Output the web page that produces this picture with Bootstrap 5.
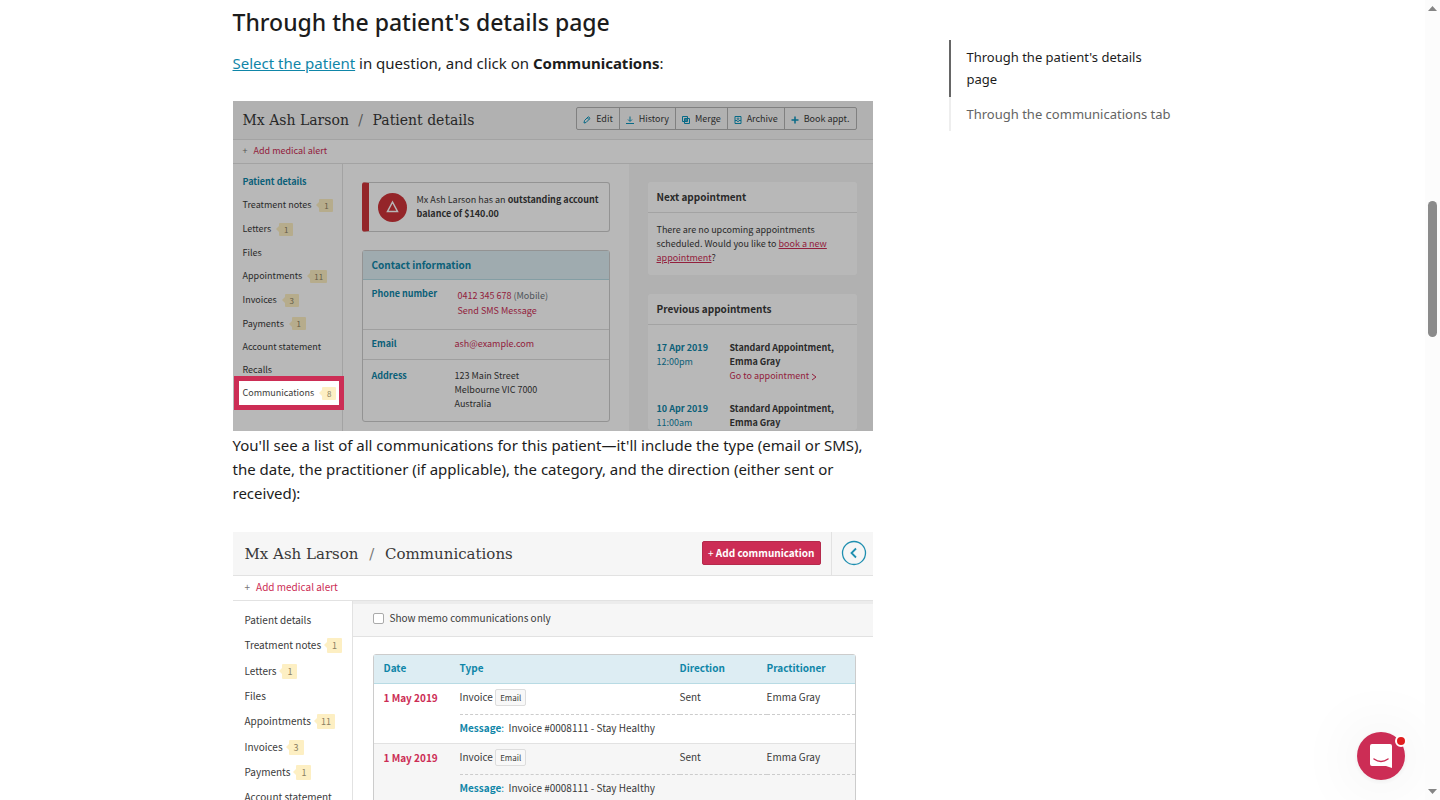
<!DOCTYPE html>
<html lang="en">
<head>
<meta charset="utf-8">
<meta name="viewport" content="width=device-width, initial-scale=1">
<title>Patient communications</title>
<link href="https://cdn.jsdelivr.net/npm/bootstrap@5.3.0/dist/css/bootstrap.min.css" rel="stylesheet">
<script src="https://cdn.jsdelivr.net/npm/bootstrap@5.3.0/dist/js/bootstrap.bundle.min.js"></script>
<style>
  :root { --teal: #0f86a8; --pink: #cc2d55; --ink: #3a3a3a; --line: #e2e2e2; --pale: #f6f6f6; }
  body { font-family: "Noto Sans", sans-serif; font-size: 15px; line-height: 24px; color: #1c1c1c; height: 100vh; overflow: hidden; }
  .page-scroll { height: 100vh; overflow: hidden; }
  .page-wrap { max-width: 960px; }
  .article-col { flex: 0 1 640px; min-width: 0; }
  .article-col h2 { font-size: 23px; line-height: 28px; font-weight: 500; padding-top: 8px; margin-bottom: 15px; }
  .article-col > p { margin: 0; }
  .article-col > p a { color: var(--teal); }
  .lead-in { padding-bottom: 26px; }
  .after-shot { padding: 2px 0 27px; }

  .toc { flex: 0 0 244px; font-size: 13px; line-height: 22px; margin-top: 40px; }
  .toc a { display: block; color: #646464; text-decoration: none; padding: 6px 16px; border-left: 2px solid #eee; }
  .toc a.current { color: #1c1c1c; border-color: #666; padding: 6px 48px 7px 16px; }

  .shot { position: relative; overflow: hidden; background: #fff; color: var(--ink); font-family: "Noto Sans CJK SC", sans-serif; font-size: 9px; line-height: 14px; }
  .shot a { text-decoration: none; color: var(--pink); }
  .shot-head { background: var(--pale); border-bottom: 1px solid var(--line); }
  .shot-title { font-family: "Roboto Slab", "DejaVu Serif", serif; color: #383838; margin: 0; font-weight: 400; white-space: nowrap; }
  .shot-alert { border-bottom: 1px solid var(--line); }
  .shot-alert span, .slash { color: #777; }
  .slash { margin: 0 6px; }
  .side { border-right: 1px solid var(--line); }
  .shot .side a { display: flex; align-items: center; color: var(--ink); white-space: nowrap; }
  .tag { position: relative; background: #fdefc3; color: #8b8062; border-radius: 1px; text-align: center; }
  .tag::before { content: ""; position: absolute; left: -3px; top: 50%; margin-top: -3px; border: 3px solid transparent; border-left: 0; border-right-color: #fdefc3; }

  .shot-a { height: 330px; }
  .shot-a::after { content: ""; position: absolute; inset: 0; background: rgba(0,0,0,.28); pointer-events: none; z-index: 1; }
  .shot-a .shot-head { height: 39px; padding: 0 16px 3px 10px; }
  .shot-a .shot-title { font-size: 14px; line-height: 20px; padding-top: 2px; }
  .shot-a .slash { margin: 0 5px; }
  .shot-a .shot-alert { height: 24px; line-height: 22px; padding-left: 10px; }
  .shot-alert span { margin-right: 6px; }
  .shot-a .side { flex: 0 0 110px; padding: 6px 0 0 10px; height: 267px; }
  .shot-a .side a { height: 23px; }
  .shot-a .side a.tagged { height: 24px; }
  .shot-a .side a.here { color: var(--teal); font-weight: 700; }
  .shot-a .tag { min-width: 14px; padding: 0 4px; line-height: 13px; font-size: 8px; margin-left: 8px; }
  .shot .side a.spot { position: relative; z-index: 2; background: #fff; border: 5px solid var(--pink); height: 34px; margin: -5px -2px 0 -9px; padding: 0 0 0 4px; }
  .tools .btn { --bs-btn-border-color: #b2b2b2; --bs-btn-border-radius: 2px; --bs-btn-color: #3a3a3a; font-family: inherit; font-size: 9px; line-height: 21px; padding: 0 6px; }
  .tools svg { width: 8px; height: 8px; margin-right: 5px; fill: none; stroke: #0b93bb; stroke-width: 2; }
  .mid { flex: 1 1 286px; padding: 18px 19px 0; }
  .notice { border: 1px solid #ccc; border-left: 7px solid #cd3439; border-radius: 3px; height: 50px; padding: 0 8px 0 9px; margin-bottom: 18px; }
  .notice svg { flex: 0 0 29px; margin-right: 10px; }
  .info { border: 1px solid #ccc; border-radius: 3px; }
  .info h3 { margin: 0; font-size: 10px; line-height: 28px; font-weight: 700; color: var(--teal); background: #ddedf3; padding: 0 9px; border-bottom: 1px solid #b8dbe4; }
  .info dl { display: flex; margin: 0; padding: 7px 9px 8px; border-top: 1px solid #ddd; }
  .info dl:first-of-type { border-top: 0; }
  .info dl:last-of-type { padding: 9px 9px 10px; }
  .info dt { flex: 0 0 83px; color: var(--teal); }
  .info dd { margin: 0; }
  .info .phones { line-height: 15px; padding: 1px 0 3px 3px; }
  .right-col { flex: 0 0 244px; background: var(--pale); padding: 18px 16px 0 19px; height: 267px; }
  .panel { background: #fff; border-radius: 3px; margin-bottom: 19px; }
  .panel h3 { margin: 0; font-size: 10px; font-weight: 700; line-height: 30px; padding: 0 9px; border-bottom: 1px solid var(--line); }
  .panel-text { padding: 10px 9px; }
  .shot .panel-text a { text-decoration: underline; }
  .visit { padding: 0 9px; margin-bottom: 19px; }
  .visit time { flex: 0 0 73px; color: var(--teal); }

  .shot-b { font-size: 10px; }
  .shot-b .shot-head { height: 44px; padding-left: 12px; }
  .shot-b .shot-title { font-size: 15px; line-height: 20px; }
  .shot-b .shot-alert { height: 25px; line-height: 22px; padding-left: 12px; }
  .shot-b .side { flex: 0 0 120px; padding: 7px 0 0 12px; }
  .shot-b .side a { height: 24px; }
  .shot-b .side a.tagged { height: 26px; }
  .shot-b .tag { min-width: 15px; padding: 0 4px; line-height: 15px; font-size: 9px; margin-left: 6px; }
  .add-btn { --bs-btn-bg: #cc2d55; --bs-btn-color: #fff; --bs-btn-border-color: #b52a4c; --bs-btn-border-radius: 2px; font-family: inherit; font-size: 10px; line-height: 22px; font-weight: 700; padding: 0 5px; margin: 0 10px 2px 0; }
  .back-cell { flex: 0 0 42px; border-left: 1px solid var(--line); padding: 0 0 2px 3px; }
  .filter { height: 36px; background: var(--pale); border-top: 3px solid #ececec; border-bottom: 1px solid var(--line); padding: 0 0 4px 20px; }
  .filter .form-check-input { width: 11px; height: 11px; border: 1px solid #aaa; border-radius: 2px; margin: 0 6px 0 0; float: none; }
  .log { margin: 17px 17px 0 20px; border: 1px solid #ccc; border-radius: 3px; }
  .log table { width: 100%; table-layout: fixed; border-collapse: separate; border-spacing: 0; }
  .log th { background: #ddedf3; color: var(--teal); height: 29px; border-bottom: 1px solid #b8dbe4; }
  .log td, .log th { padding: 0 0 2px; vertical-align: middle; }
  .log th:first-child, .log td:first-child { padding-left: 10px; }
  .log .top-line td { height: 31px; padding-bottom: 4px; }
  .log .top-line td + td { border-bottom: 1px dashed #ccc; }
  .log .msg td { height: 29px; border-bottom: 1px solid var(--line); }
  .log .date { color: var(--pink); font-weight: 700; }
  .log .alt { background: var(--pale); }
  .log .kind { border: 1px solid #ddd; background: #f8f8f8; border-radius: 2px; font-size: 8px; padding: 2px 4px; }
  .teal { color: var(--teal); }

  .chat-btn { position: fixed; right: 35px; bottom: 20px; width: 48px; height: 48px; border: 0; border-radius: 50%; background: var(--pink); padding: 0; box-shadow: 0 1px 6px rgba(0,0,0,.06), 0 2px 64px rgba(0,0,0,.1); z-index: 5; }
  .chat-dot { position: absolute; right: -2px; top: 3px; width: 12px; height: 12px; border: 2px solid #fff; border-radius: 50%; background: #e01e1e; }
  .rail { flex: 0 0 15px; height: 100vh; background: #fcfcfc; padding: 5px 0; z-index: 6; }
  .rail .thumb { width: 9px; flex: 0 0 136px; margin-top: 190px; background: #8b8b8b; border-radius: 5px; }
  .rail svg { display: block; fill: #858585; }
</style>
</head>
<body class="d-flex">
<div class="page-scroll flex-grow-1">
  <div class="page-wrap mx-auto d-flex justify-content-between">
    <main class="article-col">
      <h2>Through the patient's details page</h2>
      <p class="lead-in"><a href="#select">Select the patient</a> in question, and click on <strong>Communications</strong>:</p>

      <section class="shot shot-a" aria-label="Patient details">
        <div class="shot-head d-flex align-items-center justify-content-between">
          <h3 class="shot-title">Mx Ash Larson <span class="slash">/</span> Patient details</h3>
          <div class="btn-group tools">
            <button class="btn" type="button"><svg viewBox="0 0 16 16"><path d="M2 14l1-5 7-7q2-1 3 1t0 3l-7 7zM9 4l3 3"/></svg>Edit</button>
            <button class="btn" type="button"><svg viewBox="0 0 16 16"><path d="M8 1v9M4 7l4 4 4-4M0 15h16"/></svg>History</button>
            <button class="btn" type="button"><svg viewBox="0 0 16 16"><path d="M1 1h10v10H1zM5 5h10v10H5zM8 5v6M5 8h6"/></svg>Merge</button>
            <button class="btn" type="button"><svg viewBox="0 0 16 16"><path d="M2 1h12v14H2zM2 9h4l1 2h2l1-2h4M8 3v4M6 5l2 2 2-2"/></svg>Archive</button>
            <button class="btn" type="button"><svg viewBox="0 0 16 16"><path d="M8 1v14M1 8h14" stroke-width="3"/></svg>Book appt.</button>
          </div>
        </div>
        <div class="shot-alert"><a href="#alert"><span>+</span>Add medical alert</a></div>
        <div class="d-flex">
          <nav class="side">
            <a class="here" href="#a">Patient details</a>
            <a class="tagged" href="#a">Treatment notes<span class="tag">1</span></a>
            <a class="tagged" href="#a">Letters<span class="tag">1</span></a>
            <a href="#a">Files</a>
            <a class="tagged" href="#a">Appointments<span class="tag">11</span></a>
            <a class="tagged" href="#a">Invoices<span class="tag">3</span></a>
            <a href="#a">Payments<span class="tag">1</span></a>
            <a href="#a">Account statement</a>
            <a href="#a">Recalls</a>
            <a class="spot" href="#a">Communications<span class="tag">8</span></a>
          </nav>
          <div class="mid">
            <div class="notice d-flex align-items-center">
              <svg width="29" height="29" viewBox="0 0 29 29"><circle cx="14.500" cy="14.500" r="14.500" fill="#cd3439"/><path d="M14.500 9l5 9.500h-10z" fill="none" stroke="#fff" stroke-width="1.500"/></svg>
              <div>Mx Ash Larson has an <strong>outstanding account balance of $140.00</strong></div>
            </div>
            <div class="info">
              <h3>Contact information</h3>
              <dl><dt>Phone number</dt><dd class="phones"><a href="#p">0412 345 678</a>&nbsp;<span class="text-secondary">(Mobile)</span><br><a href="#s">Send SMS Message</a></dd></dl>
              <dl><dt>Email</dt><dd><a href="#e">ash@example.com</a></dd></dl>
              <dl><dt>Address</dt><dd>123 Main Street<br>Melbourne VIC 7000<br>Australia</dd></dl>
            </div>
          </div>
          <div class="right-col">
            <div class="panel">
              <h3>Next appointment</h3>
              <div class="panel-text">There are no upcoming appointments scheduled. Would you like to <a href="#b">book a new appointment</a>?</div>
            </div>
            <div class="panel">
              <h3 class="mb-3">Previous appointments</h3>
              <div class="visit d-flex"><time><b>17 Apr 2019</b><br>12:00pm</time><div><b>Standard Appointment,<br>Emma Gray</b><br><a href="#g">Go to appointment <svg width="6" height="8" viewBox="0 0 6 8" fill="none" stroke="currentColor"><path d="M1 1l4 3-4 3"/></svg></a></div></div>
              <div class="visit d-flex"><time><b>10 Apr 2019</b><br>11:00am</time><div><b>Standard Appointment,<br>Emma Gray</b></div></div>
            </div>
          </div>
        </div>
      </section>

      <p class="after-shot">You'll see a list of all communications for this patient—it'll include the type (email or SMS), the date, the practitioner (if applicable), the category, and the direction (either sent or received):</p>

      <section class="shot shot-b" aria-label="Communications">
        <div class="shot-head d-flex align-items-center">
          <h3 class="shot-title me-auto">Mx Ash Larson <span class="slash">/</span> Communications</h3>
          <button class="btn add-btn" type="button"><span class="fw-normal">+</span> Add communication</button>
          <div class="back-cell align-self-stretch d-flex align-items-center justify-content-center">
            <svg width="26" height="26" viewBox="0 0 26 26" fill="none" stroke="#1f8fb0"><circle cx="13" cy="13" r="11.500" stroke-width="1.300"/><path d="M15 8.500L10.500 13l4.500 4.500" stroke-width="1.800"/></svg>
          </div>
        </div>
        <div class="shot-alert"><a href="#alert"><span>+</span>Add medical alert</a></div>
        <div class="d-flex">
          <nav class="side">
            <a href="#b">Patient details</a>
            <a class="tagged" href="#b">Treatment notes<span class="tag">1</span></a>
            <a class="tagged" href="#b">Letters<span class="tag">1</span></a>
            <a href="#b">Files</a>
            <a class="tagged" href="#b">Appointments<span class="tag">11</span></a>
            <a class="tagged" href="#b">Invoices<span class="tag">3</span></a>
            <a href="#b">Payments<span class="tag">1</span></a>
            <a class="tagged" href="#b">Account statement</a>
          </nav>
          <div class="flex-grow-1">
            <div class="filter d-flex align-items-center">
              <input class="form-check-input" type="checkbox" id="memo"><label for="memo">Show memo communications only</label>
            </div>
            <div class="log">
              <table>
                <colgroup><col style="width:86px"><col style="width:220px"><col style="width:87px"><col></colgroup>
                <thead><tr><th>Date</th><th>Type</th><th>Direction</th><th>Practitioner</th></tr></thead>
                <tbody>
                  <tr class="top-line"><td class="date">1 May 2019</td><td>Invoice <span class="kind">Email</span></td><td>Sent</td><td>Emma Gray</td></tr>
                  <tr class="msg"><td></td><td colspan="3"><b class="teal">Message</b><span class="teal">:</span>&nbsp; Invoice #0008111 - Stay Healthy</td></tr>
                  <tr class="top-line alt"><td class="date">1 May 2019</td><td>Invoice <span class="kind">Email</span></td><td>Sent</td><td>Emma Gray</td></tr>
                  <tr class="msg alt"><td></td><td colspan="3"><b class="teal">Message</b><span class="teal">:</span>&nbsp; Invoice #0008111 - Stay Healthy</td></tr>
                </tbody>
              </table>
            </div>
          </div>
        </div>
      </section>
    </main>
    <nav class="toc" aria-label="On this page">
      <a class="current" href="#details">Through the patient's details page</a>
      <a href="#tab">Through the communications tab</a>
    </nav>
  </div>
</div>
<div class="rail d-flex flex-column align-items-center" aria-hidden="true">
  <svg width="9" height="6" viewBox="0 0 9 6"><path d="M0 6l4.500-5L9 6z"/></svg>
  <div class="thumb"></div>
  <svg class="mt-auto" width="9" height="6" viewBox="0 0 9 6"><path d="M0 0l4.500 5L9 0z"/></svg>
</div>
<button class="chat-btn" type="button" aria-label="Open chat">
  <svg width="48" height="48" viewBox="0 0 48 48"><path d="M15 12h18q2 0 2 2v22l-6-2H15q-2 0-2-2V14q0-2 2-2z" fill="#fff"/><path d="M17 27q7 5 14 0" fill="none" stroke="#cc2d55" stroke-width="1.500" stroke-linecap="round"/></svg>
  <span class="chat-dot"></span>
</button>
</body>
</html>
